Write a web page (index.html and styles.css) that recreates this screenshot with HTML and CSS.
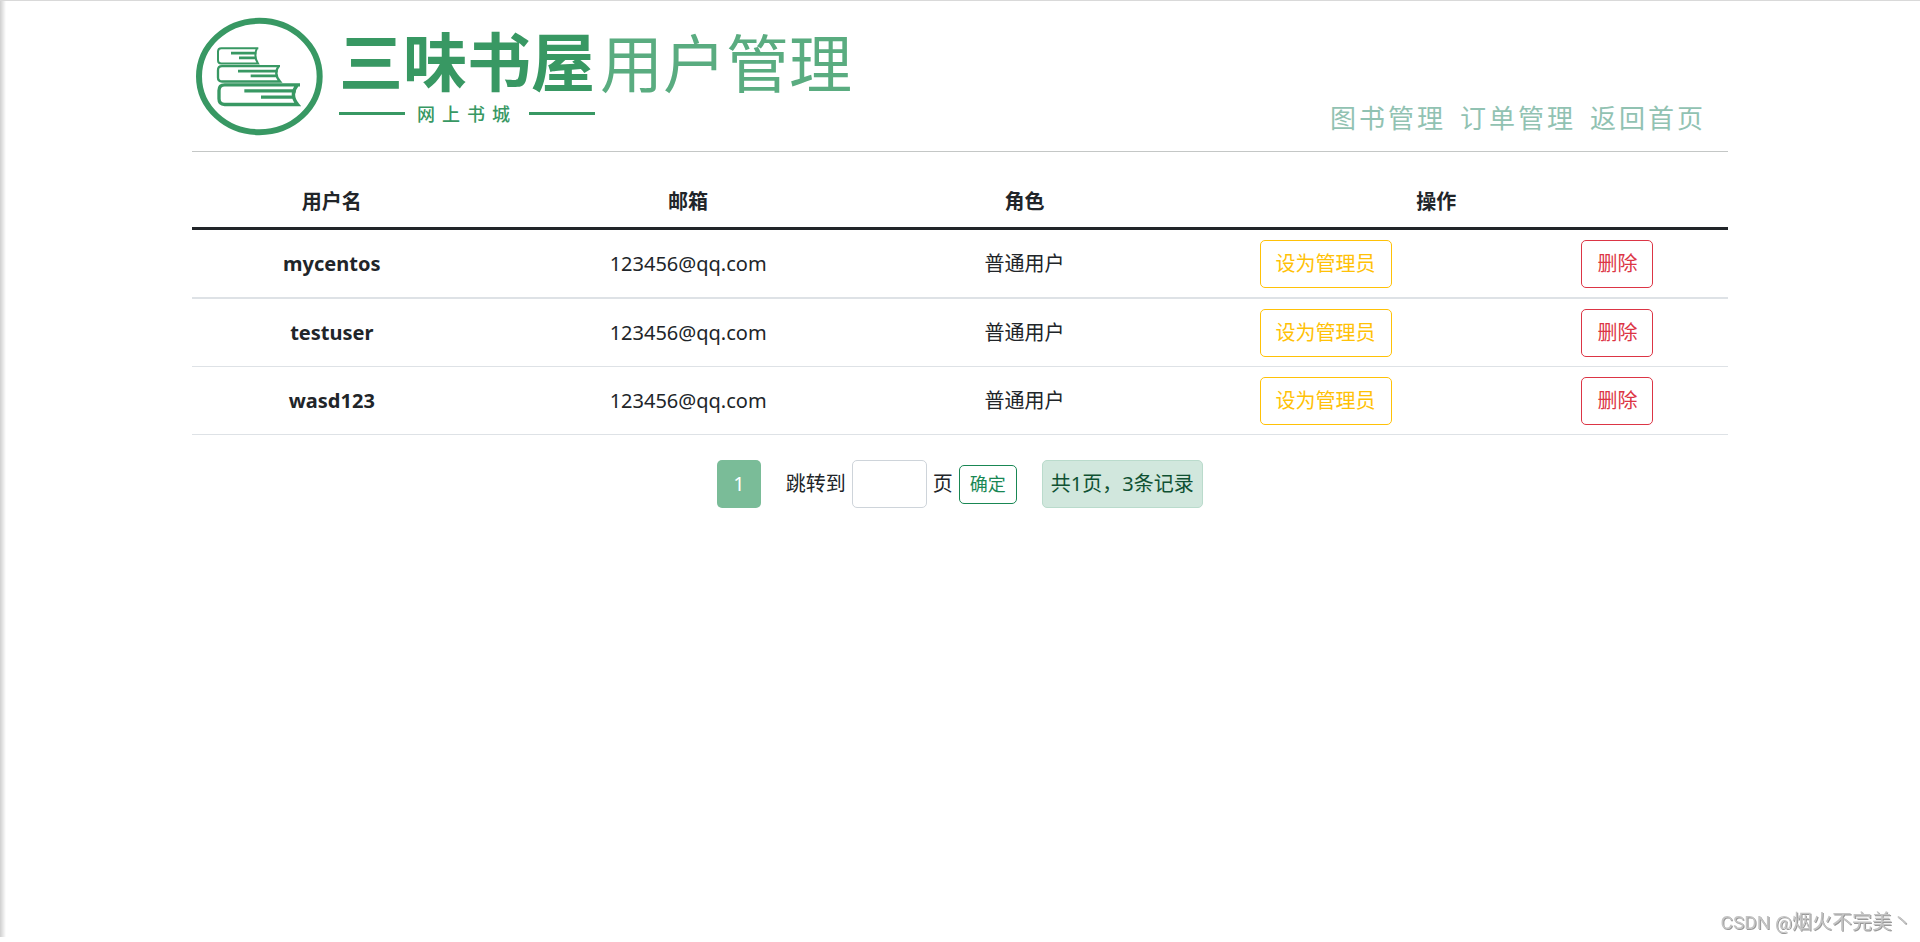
FILE: index.html
```html
<!DOCTYPE html>
<html lang="zh-CN">
<head>
<meta charset="utf-8">
<title>用户管理 - 三味书屋</title>
<link rel="stylesheet" href="styles.css">
</head>
<body>
<div class="container">
  <header class="header">
    <div class="brand">
      <svg class="emblem" viewBox="45 50 384 356" aria-hidden="true">
        <ellipse cx="238" cy="228" rx="181" ry="167" fill="none" stroke="currentColor" stroke-width="18"/>
        <g fill="none" stroke="currentColor" stroke-linejoin="miter">
          <path stroke-width="6" d="M235 143H124Q114 143 114 153V179Q114 189 124 189H234Q220 166 231 143"/>
          <path stroke-width="7" d="M300 197H126Q114 197 114 209V231Q114 243 126 243H300Q280 220 296 197"/>
          <path stroke-width="10" d="M360 253H134Q117 253 117 270V295Q117 312 134 312H353Q328 282 352 253"/>
          <path stroke-width="8" d="M153 158H229M177 172H227M174 212H293M212 226H288"/>
          <path stroke-width="10" d="M193 271H347M243 290H345"/>
        </g>
      </svg>
      <div class="wordmark">
        <span class="wordmark-name">三味书屋</span>
        <span class="wordmark-sub">网上书城</span>
      </div>
      <h1 class="page-title">用户管理</h1>
    </div>
    <nav class="nav">
      <a href="#">图书管理</a>
      <a href="#">订单管理</a>
      <a href="#">返回首页</a>
    </nav>
  </header>

  <table class="table">
    <colgroup><col class="col-name"><col class="col-mail"><col class="col-role"><col class="col-grant"><col class="col-delete"></colgroup>
    <thead>
      <tr><th scope="col">用户名</th><th scope="col">邮箱</th><th scope="col">角色</th><th scope="colgroup" colspan="2">操作</th></tr>
    </thead>
    <tbody>
      <tr><th scope="row">mycentos</th><td>123456@qq.com</td><td>普通用户</td><td><button class="btn btn-warning" type="button">设为管理员</button></td><td><button class="btn btn-danger" type="button">删除</button></td></tr>
      <tr><th scope="row">testuser</th><td>123456@qq.com</td><td>普通用户</td><td><button class="btn btn-warning" type="button">设为管理员</button></td><td><button class="btn btn-danger" type="button">删除</button></td></tr>
      <tr><th scope="row">wasd123</th><td>123456@qq.com</td><td>普通用户</td><td><button class="btn btn-warning" type="button">设为管理员</button></td><td><button class="btn btn-danger" type="button">删除</button></td></tr>
    </tbody>
  </table>

  <div class="pager">
    <a class="page-link" href="#" aria-current="page">1</a>
    <form class="jump">
      <label for="page">跳转到</label>
      <input id="page" class="page-input" type="text">
      <span>页</span>
      <button class="btn btn-success" type="button">确定</button>
    </form>
    <div class="summary">共1页，3条记录</div>
  </div>
</div>
<div class="watermark"><span class="watermark-site">CSDN @</span>烟火不完美丶</div>
</body>
</html>
```
FILE: styles.css
```css
* { box-sizing: border-box; }

body {
  margin: 0;
  min-height: 100vh;
  border-top: 1px solid #d9d9d9;
  background: linear-gradient(to right, #cfcfcf, #fff 6px) no-repeat 0 0 / 100% calc(100% - 5px) #fff;
  color: #212529;
  font: 20px/30px "Noto Sans", "Noto Sans CJK SC", sans-serif;
}

.container { width: 80%; margin: 0 auto; }

.header {
  display: flex;
  justify-content: space-between;
  align-items: flex-end;
  border-bottom: 1px solid #c4c7c6;
  padding: 16px 22px 15px 3px;
}

.brand { display: flex; align-items: flex-start; color: #389863; }
.emblem { display: block; width: 128px; height: 119px; }

.wordmark { display: flex; flex-direction: column; margin: 9px 0 0 16px; }
.wordmark-name { font: 700 64px/64px "Noto Sans CJK SC", sans-serif; }
.wordmark-sub {
  display: flex;
  align-items: center;
  justify-content: space-between;
  font: 500 18px/24px "Noto Sans CJK SC", sans-serif;
  letter-spacing: 7px;
  margin-top: 11px;
}
.wordmark-sub::before,
.wordmark-sub::after { content: ""; width: 66px; height: 3px; background: currentColor; }

.page-title {
  margin: 11px 0 0 5px;
  color: #5aac80;
  font: 400 63px/64px "Noto Sans CJK SC", sans-serif;
}

.nav { display: flex; gap: 14px; margin-bottom: 1px; }
.nav a {
  color: #91c2b2;
  font: 400 26px/36px "Noto Sans CJK SC", sans-serif;
  letter-spacing: 3px;
  text-decoration: none;
}

.table {
  width: 100%;
  margin: 25px 0;
  border-collapse: separate;
  border-spacing: 0;
  table-layout: fixed;
  text-align: center;
}
.col-name { width: 18.2%; }
.col-mail { width: 28.2%; }
.col-role { width: 15.6%; }
.col-grant { width: 23.6%; }
.col-delete { width: 14.4%; }
.table th, .table td { padding: 10px 10px 9px; border-bottom: 1px solid #dee2e6; vertical-align: middle; }
.table thead th { padding-bottom: 10px; border-bottom: 3px solid #212529; }
.table tbody tr:first-child > * { border-bottom-width: 2px; }

.btn {
  display: inline-block;
  padding: 8px 15px;
  border: 1px solid currentColor;
  border-radius: 5px;
  background: transparent;
  font: 400 20px/30px "Noto Sans", "Noto Sans CJK SC", sans-serif;
  vertical-align: top;
}
.btn-warning { color: #ffc107; }
.btn-danger { color: #dc3545; }
.btn-success { padding: 5px 10px; color: #198754; font-size: 18px; line-height: 27px; }

.pager { display: flex; justify-content: center; gap: 25px; }
.page-link {
  padding: 9px 16px;
  border-radius: 5px;
  background: #7abc98;
  color: #fff;
  text-decoration: none;
}
.jump { display: flex; align-items: center; gap: 6px; }
.page-input {
  width: 75px;
  height: 48px;
  padding: 8px 15px;
  border: 1px solid #ced4da;
  border-radius: 5px;
  background: #fff;
  font: inherit;
}
.summary {
  padding: 8px;
  border: 1px solid #badbcc;
  border-radius: 5px;
  background: #d1e7dd;
  color: #0f5132;
}

.watermark {
  position: fixed;
  right: 8px;
  bottom: 4px;
  color: #c4c4c4;
  font: 400 20px/30px Roboto, "Noto Sans CJK SC", sans-serif;
  text-shadow: 1px 1px 0 #999;
}
.watermark-site { font-size: 19px; }
```
